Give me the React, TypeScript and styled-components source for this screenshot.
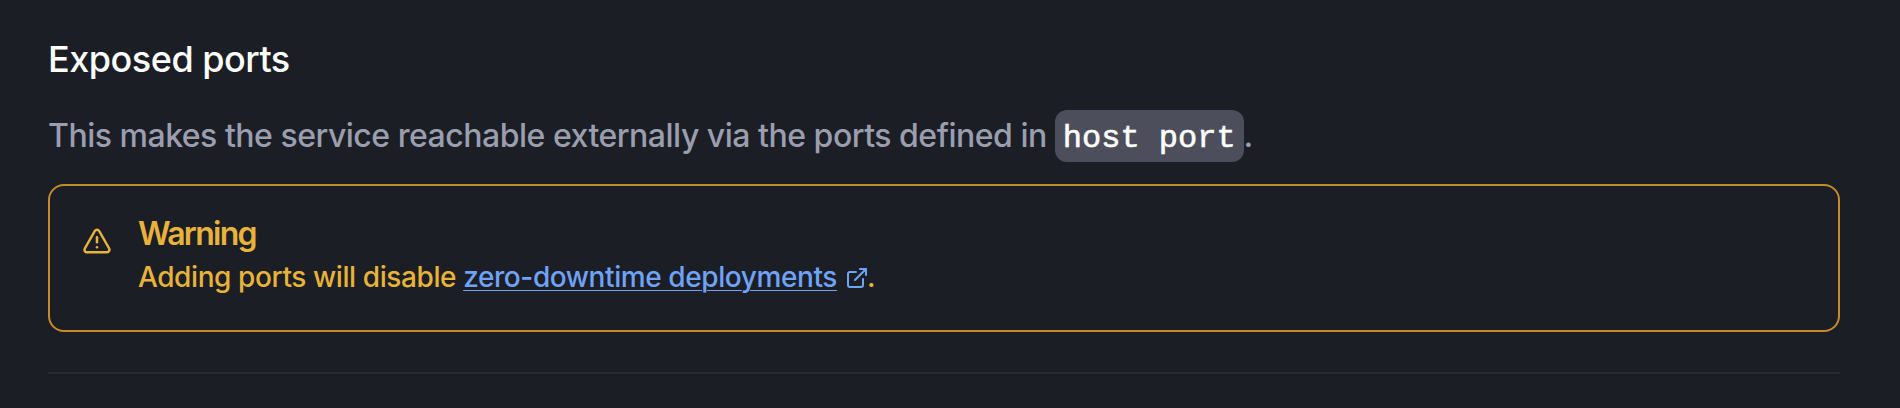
import styled, { createGlobalStyle } from 'styled-components';
import { ExternalLink, TriangleAlert } from 'lucide-react';

const GlobalStyle = createGlobalStyle`
  *, *::before, *::after { box-sizing: border-box; }
  body {
    margin: 0;
    background: #1c1e26;
    font-family: Inter, "Liberation Sans", sans-serif;
  }
`;

const Section = styled.section`
  display: flex;
  flex-direction: column;
  height: 408px;
  padding: 35px 60px 0 48px;
`;

const Title = styled.h2`
  margin: 0;
  color: #fff;
  font-size: 36px;
  font-weight: 500;
  line-height: 48px;
  letter-spacing: -0.48px;
`;

const Description = styled.p`
  height: 54px;
  margin: 26px 0 21px;
  color: #9a9eae;
  font-size: 32px;
  font-weight: 500;
  line-height: 54px;
  letter-spacing: -0.49px;
  white-space: nowrap;
`;

const Code = styled.code`
  padding: 10px 8px 5px;
  border-radius: 12px;
  background: #4c4f5b;
  color: #fff;
  font-family: "Liberation Mono", monospace;
  font-size: 32px;
  font-weight: 400;
  letter-spacing: 0;
  -webkit-text-stroke: 0.6px #fff;
`;

const Alert = styled.div`
  display: flex;
  gap: 26px;
  height: 148px;
  padding: 26px 32px;
  border: 2px solid #c68a2c;
  border-radius: 16px;
  color: #e8b339;
`;

const AlertIcon = styled(TriangleAlert)`
  flex: none;
  margin-top: 14px;
`;

const AlertBody = styled.div`
  display: flex;
  flex-direction: column;
`;

const AlertTitle = styled.h3`
  margin: 0;
  font-size: 32px;
  font-weight: 600;
  line-height: 44px;
  letter-spacing: -1.7px;
`;

const AlertText = styled.p`
  margin: 0;
  font-size: 28px;
  font-weight: 500;
  line-height: 42px;
  letter-spacing: -0.41px;
  white-space: nowrap;
`;

const DocLink = styled.a`
  color: #6fa3f8;
`;

const LinkLabel = styled.span`
  text-decoration: underline;
  text-decoration-thickness: 1px;
  text-underline-offset: 3px;
`;

const LinkIcon = styled(ExternalLink)`
  margin: 0 -2px 0 8px;
  vertical-align: -3px;
`;

const Divider = styled.hr`
  width: 100%;
  height: 2px;
  margin: 40px 0 0;
  border: 0;
  background: #292b31;
`;

export default function App() {
  return (
    <>
      <GlobalStyle />
      <Section>
        <Title>Exposed ports</Title>
        <Description>
          This makes the service reachable externally via the ports defined in <Code>host port</Code>.
        </Description>
        <Alert role="alert">
          <AlertIcon size={30} strokeWidth={2} />
          <AlertBody>
            <AlertTitle>Warning</AlertTitle>
            <AlertText>
              Adding ports will disable{' '}
              <DocLink>
                <LinkLabel>zero-downtime deployments</LinkLabel>
                <LinkIcon size={24} strokeWidth={2} />
              </DocLink>
              .
            </AlertText>
          </AlertBody>
        </Alert>
        <Divider />
      </Section>
    </>
  );
}
